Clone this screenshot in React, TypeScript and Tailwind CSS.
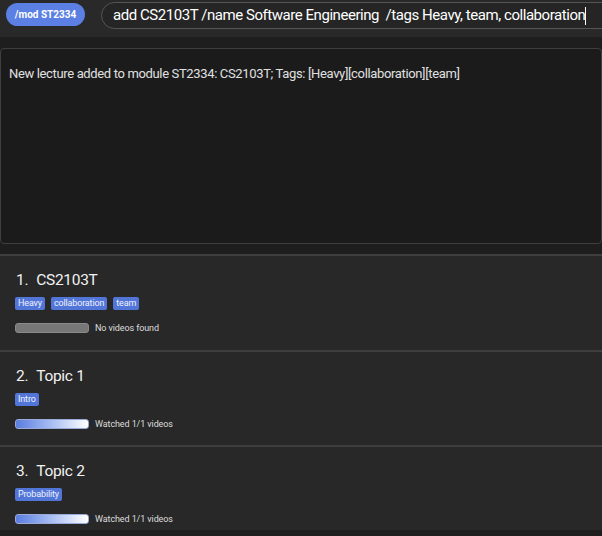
const lectures = [
  { name: "CS2103T", tags: ["Heavy", "collaboration", "team"], watched: null, h: "h-[96px]" },
  { name: "Topic 1", tags: ["Intro"], watched: "Watched 1/1 videos", h: "h-[95px]" },
  { name: "Topic 2", tags: ["Probability"], watched: "Watched 1/1 videos", h: "h-[85px]" },
];

function LectureCard({
  index,
  lecture,
}: {
  index: number;
  lecture: (typeof lectures)[number];
}) {
  return (
    <div className={`${lecture.h} shrink-0 border-t-2 border-[#3e3e3e] bg-[#282828] pl-[15px] pt-[15px]`}>
      <div className="flex pl-px text-[15.5px] leading-[19px] tracking-[-0.3px] text-[#f2f2f2]">
        <span>{index}.</span>
        <span className="ml-[8px]">{lecture.name}</span>
      </div>
      <div className="mt-[7px] flex gap-[6px]">
        {lecture.tags.map((tag) => (
          <span
            key={tag}
            className="rounded-[2px] bg-[#5275d8] px-[3px] text-[9px] leading-[13px] tracking-[-0.15px] text-[#eef2ff]"
          >
            {tag}
          </span>
        ))}
      </div>
      <div className="mt-[12px] flex items-center gap-[6px]">
        {lecture.watched ? (
          <div className="h-[10px] w-[74px] rounded-[3px] border border-[#9aa9d8] bg-linear-to-r from-[#5b7de0] to-white" />
        ) : (
          <div className="h-[10px] w-[74px] rounded-[3px] border border-[#8a8a8a] bg-[#777777]" />
        )}
        <span className="text-[9px] leading-[12px] tracking-[-0.1px] text-[#dddddd]">
          {lecture.watched ?? "No videos found"}
        </span>
      </div>
    </div>
  );
}

export default function App() {
  return (
    <div className="flex h-[536px] w-[602px] flex-col overflow-hidden bg-[#1e1e1e] font-['Roboto',sans-serif]">
      <div className="flex h-[37px] shrink-0 items-start gap-[16px] bg-[#292929] pl-[6px] pt-[2px]">
        <div className="mt-px flex h-[23px] w-[79px] shrink-0 items-center justify-center whitespace-nowrap rounded-full bg-[#5b7fe2] text-[10px] font-bold text-white">
          /mod ST2334
        </div>
        <div className="flex h-[27px] w-[520px] shrink-0 items-center rounded-full border border-[#555555] bg-[#252525] pl-[11px] text-[15px] tracking-[-0.45px] text-white">
          <span className="whitespace-pre">add CS2103T /name Software Engineering  /tags Heavy, team, collaboration</span>
          <span className="h-[18px] w-px bg-white" />
        </div>
      </div>

      <div className="mt-[11px] h-[196px] shrink-0 rounded-[4px] border border-[#3f3f3f] bg-[#1b1b1b] px-[8px] pt-[16px] text-[13px] leading-[17px] tracking-[-0.35px] text-[#e0e0e0]">
        New lecture added to module ST2334: CS2103T; Tags: [Heavy][collaboration][team]
      </div>

      <div className="mt-[10px] flex flex-col">
        {lectures.map((lecture, i) => (
          <LectureCard key={lecture.name} index={i + 1} lecture={lecture} />
        ))}
      </div>
    </div>
  );
}
